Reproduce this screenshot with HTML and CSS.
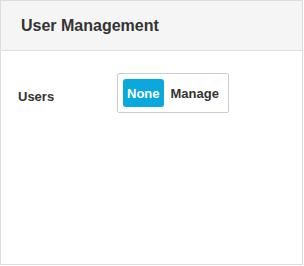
FILE: index.html
```html
<!DOCTYPE html>
<html lang="en">
<head>
    <meta charset="UTF-8">
    <meta name="viewport" content="width=device-width, initial-scale=1.0">
    <title>User Management</title>
    <link rel="stylesheet" href="styles.css">
</head>
<body>
    <div class="panel">
        <div class="panel-heading">
            <h3>User Management</h3>
        </div>
        <div class="panel-body">
            <div class="perm-row">
                <label class="perm-label">Users</label>
                <div class="btn-group">
                    <button class="btn active">None</button>
                    <button class="btn">Manage</button>
                </div>
            </div>
        </div>
    </div>
</body>
</html>
```

FILE: styles.css
```css
body {
    margin: 0;
    font-family: "Liberation Sans", Arial, sans-serif;
    background-color: white;
}
.panel {
    width: 303px;
    height: 265px;
    box-sizing: border-box;
    border: 1px solid #ddd;
    background-color: white;
}
.panel-heading {
    height: 49px;
    background-color: #f5f5f5;
    border-bottom: 1px solid #ddd;
    padding: 0 20px;
    display: flex;
    align-items: center;
}
.panel-heading h3 {
    margin: 0;
    font-size: 16px;
    font-weight: bold;
    color: #333;
}
.panel-body {
    padding: 22px 17px;
}
.perm-row {
    display: flex;
    align-items: flex-start;
}
.perm-label {
    width: 99px;
    padding-top: 16px;
    font-size: 13px;
    font-weight: bold;
    color: #333;
}
.btn-group {
    display: flex;
    gap: 3px;
    padding: 5px;
    border: 1px solid #ccc;
    border-radius: 2px;
}
.btn {
    height: 28px;
    padding: 0 4px;
    border: none;
    border-radius: 3px;
    background: none;
    font-family: inherit;
    font-size: 13px;
    font-weight: bold;
    color: #333;
    cursor: pointer;
}
.btn.active {
    background-color: #0aa8dc;
    color: white;
}
```
